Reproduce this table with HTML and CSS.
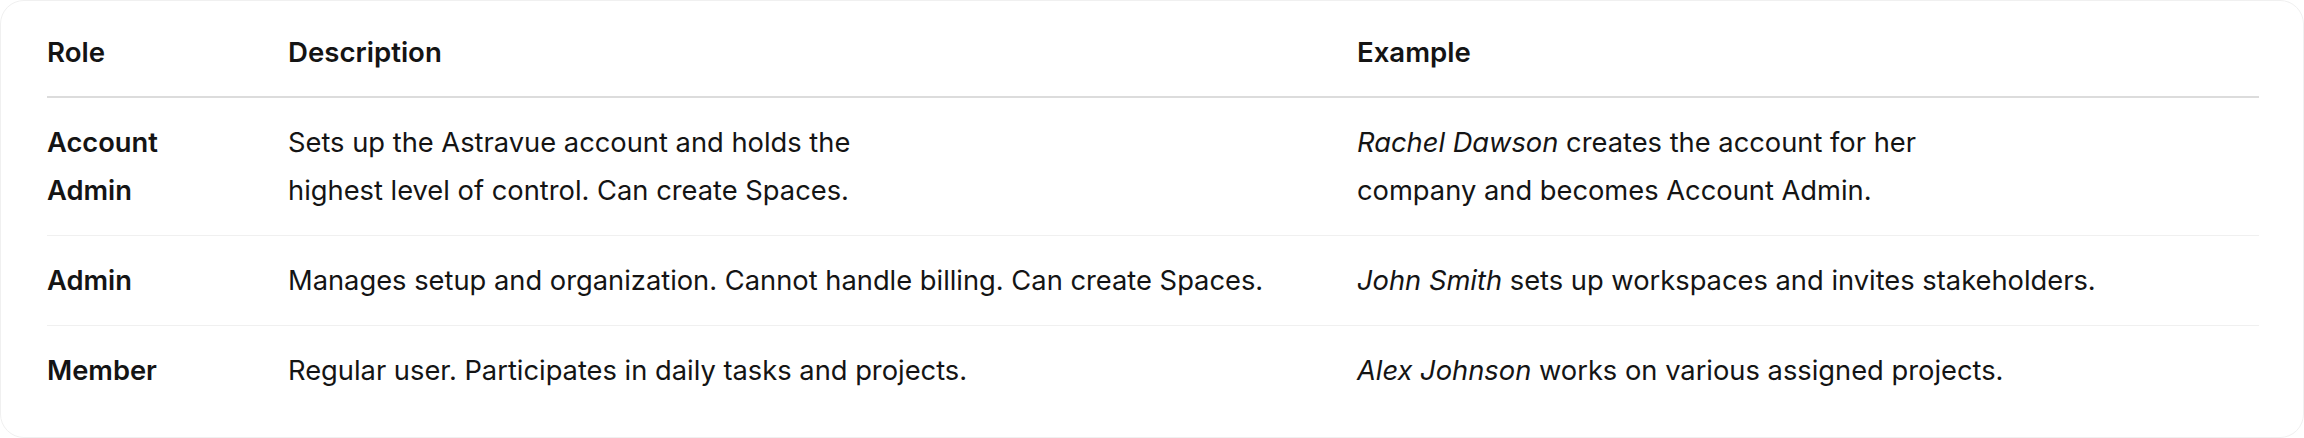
FILE: index.html
```html
<!DOCTYPE html>
<html lang="en">
<head>
<meta charset="utf-8">
<title>Roles</title>
<link rel="stylesheet" href="styles.css">
</head>
<body>
<div class="card">
  <table class="roles">
    <colgroup>
      <col class="col-role">
      <col class="col-desc">
      <col class="col-example">
    </colgroup>
    <thead>
      <tr>
        <th>Role</th>
        <th>Description</th>
        <th>Example</th>
      </tr>
    </thead>
    <tbody>
      <tr>
        <td class="role">Account Admin</td>
        <td>Sets up the Astravue account and holds the<br>highest level of control. Can create Spaces.</td>
        <td><em>Rachel Dawson</em> creates the account for her<br>company and becomes Account Admin.</td>
      </tr>
      <tr>
        <td class="role">Admin</td>
        <td>Manages setup and organization. Cannot handle billing. Can create Spaces.</td>
        <td><em>John Smith</em> sets up workspaces and invites stakeholders.</td>
      </tr>
      <tr>
        <td class="role">Member</td>
        <td>Regular user. Participates in daily tasks and projects.</td>
        <td><em>Alex Johnson</em> works on various assigned projects.</td>
      </tr>
    </tbody>
  </table>
</div>
</body>
</html>
```

FILE: styles.css
```css
html, body {
  margin: 0;
  padding: 0;
  background: #ffffff;
}

body {
  font-family: Inter, "Noto Sans", "Liberation Sans", sans-serif;
  color: #141414;
  width: 2304px;
  height: 438px;
  overflow: hidden;
}

.card {
  box-sizing: border-box;
  width: 2304px;
  height: 438px;
  border: 1px solid #f0f0f0;
  border-radius: 24px;
  padding: 5px 44px 0 46px;
  background: #fff;
}

.roles {
  width: 100%;
  border-collapse: collapse;
  table-layout: fixed;
  font-size: 27.3px;
  line-height: 48px;
}

.col-role { width: 241px; }
.col-desc { width: 1069px; }

.roles th {
  text-align: left;
  font-weight: 600;
  font-size: 27.6px;
  padding: 22px 72px 20px 0;
  border-bottom: 2px solid #dcdcdc;
}

.roles td {
  vertical-align: top;
  padding: 21px 72px 20px 0;
  font-weight: 400;
  border-bottom: 1px solid #f0f0f0;
}

.roles tbody tr:last-child td {
  border-bottom: none;
}

.roles td.role {
  font-weight: 600;
}

.roles em {
  font-style: italic;
}
```
